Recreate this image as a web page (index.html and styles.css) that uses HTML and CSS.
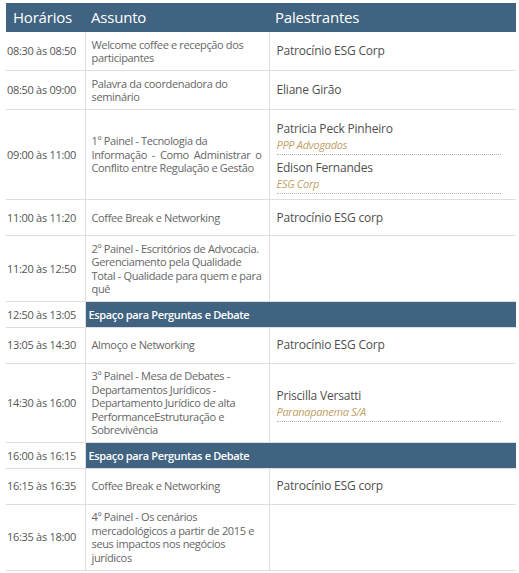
FILE: index.html
```html
<!DOCTYPE html>
<html lang="pt-BR">
<head>
<meta charset="utf-8">
<title>Programação</title>
<link rel="stylesheet" href="styles.css">
</head>
<body>
<table class="schedule">
  <colgroup>
    <col class="col-time">
    <col class="col-subject">
    <col class="col-speaker">
  </colgroup>
  <thead>
    <tr>
      <th class="th-time">Horários</th>
      <th>Assunto</th>
      <th>Palestrantes</th>
    </tr>
  </thead>
  <tbody>
    <tr>
      <td class="time">08:30 às 08:50</td>
      <td class="subject">Welcome coffee e recepção dos participantes</td>
      <td class="speaker"><div class="plain">Patrocínio ESG Corp</div></td>
    </tr>
    <tr>
      <td class="time">08:50 às 09:00</td>
      <td class="subject">Palavra da coordenadora do seminário</td>
      <td class="speaker"><div class="plain">Eliane Girão</div></td>
    </tr>
    <tr>
      <td class="time">09:00 às 11:00</td>
      <td class="subject justify">1º Painel - Tecnologia da<br>Informação - Como Administrar o Conflito entre Regulação e Gestão</td>
      <td class="speaker">
        <div class="person"><div class="name">Patricia Peck Pinheiro</div><div class="company">PPP Advogados</div></div>
        <div class="person"><div class="name">Edison Fernandes</div><div class="company">ESG Corp</div></div>
      </td>
    </tr>
    <tr>
      <td class="time">11:00 às 11:20</td>
      <td class="subject">Coffee Break e Networking</td>
      <td class="speaker"><div class="plain">Patrocínio ESG corp</div></td>
    </tr>
    <tr>
      <td class="time">11:20 às 12:50</td>
      <td class="subject">2º Painel - Escritórios de Advocacia. Gerenciamento pela Qualidade Total - Qualidade para quem e para quê</td>
      <td class="speaker"></td>
    </tr>
    <tr class="bar-row">
      <td class="time">12:50 às 13:05</td>
      <td class="bar" colspan="2">Espaço para Perguntas e Debate</td>
    </tr>
    <tr>
      <td class="time">13:05 às 14:30</td>
      <td class="subject">Almoço e Networking</td>
      <td class="speaker"><div class="plain">Patrocínio ESG Corp</div></td>
    </tr>
    <tr>
      <td class="time">14:30 às 16:00</td>
      <td class="subject">3º Painel - Mesa de Debates - Departamentos Jurídicos - Departamento Jurídico de alta PerformanceEstruturação e Sobrevivência</td>
      <td class="speaker">
        <div class="person"><div class="name">Priscilla Versatti</div><div class="company">Paranapanema S/A</div></div>
      </td>
    </tr>
    <tr class="bar-row">
      <td class="time">16:00 às 16:15</td>
      <td class="bar" colspan="2">Espaço para Perguntas e Debate</td>
    </tr>
    <tr>
      <td class="time">16:15 às 16:35</td>
      <td class="subject">Coffee Break e Networking</td>
      <td class="speaker"><div class="plain">Patrocínio ESG corp</div></td>
    </tr>
    <tr>
      <td class="time">16:35 às 18:00</td>
      <td class="subject">4º Painel - Os cenários mercadológicos a partir de 2015 e seus impactos nos negócios jurídicos</td>
      <td class="speaker"></td>
    </tr>
  </tbody>
</table>
</body>
</html>
```
FILE: styles.css
```css
* { box-sizing: border-box; }
html, body { background: #ffffff; }
body {
  margin: 0;
  padding: 3px 3px 0 6px;
  font-family: "Open Sans", "Noto Sans", sans-serif;
  color: #5a5a5a;
}
.schedule {
  width: 510px;
  border-collapse: collapse;
  table-layout: fixed;
}
.col-time { width: 79px; }
.col-subject { width: 184px; }
.col-speaker { width: 247px; }

.schedule thead th {
  background: #3f6381;
  color: #ffffff;
  font-weight: 500;
  font-size: 15px;
  line-height: 19px;
  text-align: left;
  padding: 5px 7px 5px 6px;
  height: 29px;
  letter-spacing: -0.2px;
}
.schedule thead th.th-time { padding-left: 7px; }

.schedule tbody td {
  border-bottom: 1px solid #dedede;
  vertical-align: middle;
  font-size: 11px;
  line-height: 13.5px;
  letter-spacing: -0.35px;
  padding: 5.5px 6px;
}
.schedule tbody td.time {
  padding-left: 1px;
  padding-right: 0;
  color: #555555;
  border-right: 1px solid #dedede;
  white-space: nowrap;
  letter-spacing: -0.3px;
}
.schedule tbody td.subject {
  color: #666666;
  border-right: 1px solid #dedede;
  padding-left: 6px;
  padding-right: 7px;
}
.schedule tbody td.justify { text-align: justify; }
.schedule tbody td.speaker {
  padding-left: 7px;
  padding-right: 15px;
}
.plain {
  font-size: 12px;
  line-height: 24px;
  color: #4f4f4f;
  letter-spacing: -0.2px;
}
.person {
  padding: 4px 0 2px;
  border-bottom: 1px dotted #b5b5b5;
}
.name {
  font-size: 12px;
  line-height: 17px;
  color: #4f4f4f;
  letter-spacing: -0.2px;
}
.company {
  font-size: 11px;
  line-height: 15px;
  font-style: italic;
  color: #bf9f66;
  letter-spacing: -0.3px;
}
.schedule tbody td.bar {
  background: #3f6381;
  color: #ffffff;
  font-weight: 600;
  padding: 5.5px 6px 5.5px 3px;
}
```
